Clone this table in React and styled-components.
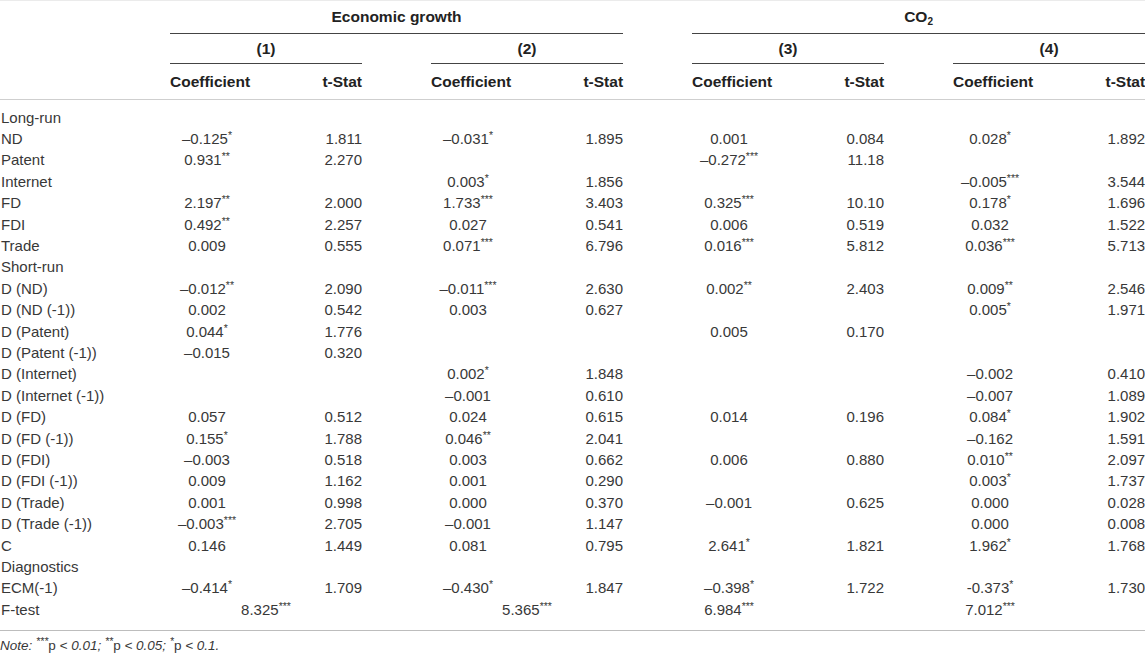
import React from 'react'
import styled, {createGlobalStyle} from 'styled-components'

const GlobalStyle = createGlobalStyle`
  body {
    margin: 0;
    background: #fff;
    font-family: "Liberation Sans", Arial, sans-serif;
    color: #383838;
  }
`

const Page = styled.div`
  width: 1145px;
`

const Table = styled.table`
  width: 1145px;
  table-layout: fixed;
  border-collapse: collapse;
  border-top: 1px solid #ebebeb;
  font-size: 15px;
  line-height: 1;
`

const HeadCell = styled.th`
  padding: 0;
  font-size: 15.5px;
  font-weight: bold;
  color: #222;
  white-space: nowrap;
  text-align: ${p => p.$align || 'center'};
  vertical-align: middle;
  border-bottom: ${p => (p.$line ? '1px solid #444' : 'none')};
`

const HeadRow = styled.tr`
  height: ${p => p.$h}px;
  & > th {
    padding-top: ${p => p.$pt || 0}px;
  }
`

const ColumnRow = styled.tr`
  height: 36px;
  border-bottom: 1px solid #cfcfcf;
`

const Row = styled.tr`
  height: 21.4px;
`

const Spacer = styled.tr`
  height: ${p => p.$h}px;
`

const Label = styled.td`
  padding: 0 0 0 1px;
  white-space: nowrap;
  text-align: left;
`

const Cell = styled.td`
  padding: 0;
  white-space: nowrap;
  text-align: ${p => p.$align || 'center'};
`

const Stars = styled.sup`
  font-size: 10.5px;
  vertical-align: 5px;
  line-height: 0;
`

const Sub = styled.sub`
  font-size: 10px;
  vertical-align: -3px;
  line-height: 0;
`

const BottomRule = styled.tr`
  border-bottom: 1px solid #bdbdbd;
  height: 11px;
`

const Note = styled.p`
  margin: 7px 0 0;
  font-size: 13.5px;
  font-style: italic;
  color: #383838;
  & span {
    font-style: normal;
  }
`

const cols = [170, 74, 118, 69, 74, 118, 69, 74, 118, 69, 74, 118]

const rows = [
  {section: 'Long-run'},
  {label: 'ND', v: ['–0.125*', '1.811', '–0.031*', '1.895', '0.001', '0.084', '0.028*', '1.892']},
  {label: 'Patent', v: ['0.931**', '2.270', '', '', '–0.272***', '11.18', '', '']},
  {label: 'Internet', v: ['', '', '0.003*', '1.856', '', '', '–0.005***', '3.544']},
  {label: 'FD', v: ['2.197**', '2.000', '1.733***', '3.403', '0.325***', '10.10', '0.178*', '1.696']},
  {label: 'FDI', v: ['0.492**', '2.257', '0.027', '0.541', '0.006', '0.519', '0.032', '1.522']},
  {label: 'Trade', v: ['0.009', '0.555', '0.071***', '6.796', '0.016***', '5.812', '0.036***', '5.713']},
  {section: 'Short-run'},
  {label: 'D (ND)', v: ['–0.012**', '2.090', '–0.011***', '2.630', '0.002**', '2.403', '0.009**', '2.546']},
  {label: 'D (ND (-1))', v: ['0.002', '0.542', '0.003', '0.627', '', '', '0.005*', '1.971']},
  {label: 'D (Patent)', v: ['0.044*', '1.776', '', '', '0.005', '0.170', '', '']},
  {label: 'D (Patent (-1))', v: ['–0.015', '0.320', '', '', '', '', '', '']},
  {label: 'D (Internet)', v: ['', '', '0.002*', '1.848', '', '', '–0.002', '0.410']},
  {label: 'D (Internet (-1))', v: ['', '', '–0.001', '0.610', '', '', '–0.007', '1.089']},
  {label: 'D (FD)', v: ['0.057', '0.512', '0.024', '0.615', '0.014', '0.196', '0.084*', '1.902']},
  {label: 'D (FD (-1))', v: ['0.155*', '1.788', '0.046**', '2.041', '', '', '–0.162', '1.591']},
  {label: 'D (FDI)', v: ['–0.003', '0.518', '0.003', '0.662', '0.006', '0.880', '0.010**', '2.097']},
  {label: 'D (FDI (-1))', v: ['0.009', '1.162', '0.001', '0.290', '', '', '0.003*', '1.737']},
  {label: 'D (Trade)', v: ['0.001', '0.998', '0.000', '0.370', '–0.001', '0.625', '0.000', '0.028']},
  {label: 'D (Trade (-1))', v: ['–0.003***', '2.705', '–0.001', '1.147', '', '', '0.000', '0.008']},
  {label: 'C', v: ['0.146', '1.449', '0.081', '0.795', '2.641*', '1.821', '1.962*', '1.768']},
  {section: 'Diagnostics'},
  {label: 'ECM(-1)', v: ['–0.414*', '1.709', '–0.430*', '1.847', '–0.398*', '1.722', '-0.373*', '1.730']},
]

const Value = ({text}) => {
  const m = text.match(/^(.*?)(\**)$/)
  return (
    <>
      {m[1]}
      {m[2] && <Stars>{m[2]}</Stars>}
    </>
  )
}

const DataRow = ({label, v}) => {
  const cells = [<Label key="l">{label}</Label>]
  for (let b = 0; b < 4; b++) {
    if (b > 0) cells.push(<Cell key={'g' + b} />)
    cells.push(<Cell key={'c' + b}><Value text={v[b * 2]} /></Cell>)
    cells.push(<Cell key={'t' + b} $align="right"><Value text={v[b * 2 + 1]} /></Cell>)
  }
  return <Row>{cells}</Row>
}

const App = () => {
  return (
    <Page>
      <GlobalStyle />
      <Table>
        <colgroup>
          {cols.map((w, i) => <col key={i} style={{width: w}} />)}
        </colgroup>
        <thead>
          <HeadRow $h={33}>
            <HeadCell />
            <HeadCell colSpan={5} $line>Economic growth</HeadCell>
            <HeadCell />
            <HeadCell colSpan={5} $line>CO<Sub>2</Sub></HeadCell>
          </HeadRow>
          <HeadRow $h={30} $pt={1}>
            <HeadCell />
            <HeadCell colSpan={2} $line>(1)</HeadCell>
            <HeadCell />
            <HeadCell colSpan={2} $line>(2)</HeadCell>
            <HeadCell />
            <HeadCell colSpan={2} $line>(3)</HeadCell>
            <HeadCell />
            <HeadCell colSpan={2} $line>(4)</HeadCell>
          </HeadRow>
          <ColumnRow>
            <HeadCell />
            <HeadCell $align="left">Coefficient</HeadCell>
            <HeadCell $align="right">t-Stat</HeadCell>
            <HeadCell />
            <HeadCell $align="left">Coefficient</HeadCell>
            <HeadCell $align="right">t-Stat</HeadCell>
            <HeadCell />
            <HeadCell $align="left">Coefficient</HeadCell>
            <HeadCell $align="right">t-Stat</HeadCell>
            <HeadCell />
            <HeadCell $align="left">Coefficient</HeadCell>
            <HeadCell $align="right">t-Stat</HeadCell>
          </ColumnRow>
        </thead>
        <tbody>
          <Spacer $h={7}><td colSpan={12} /></Spacer>
          {rows.map((r, i) =>
            r.section ? (
              <Row key={i}><Label colSpan={12}>{r.section}</Label></Row>
            ) : (
              <DataRow key={i} label={r.label} v={r.v} />
            )
          )}
          <Row>
            <Label>F-test</Label>
            <Cell colSpan={2}><Value text="8.325***" /></Cell>
            <Cell />
            <Cell colSpan={2}><Value text="5.365***" /></Cell>
            <Cell />
            <Cell><Value text="6.984***" /></Cell>
            <Cell />
            <Cell />
            <Cell><Value text="7.012***" /></Cell>
            <Cell />
          </Row>
          <BottomRule><td colSpan={12} /></BottomRule>
        </tbody>
      </Table>
      <Note>
        Note: <Stars>***</Stars><span>p</span> &lt; 0.01; <Stars>**</Stars><span>p</span> &lt; 0.05; <Stars>*</Stars><span>p</span> &lt; 0.1.
      </Note>
    </Page>
  )
}

export default App
